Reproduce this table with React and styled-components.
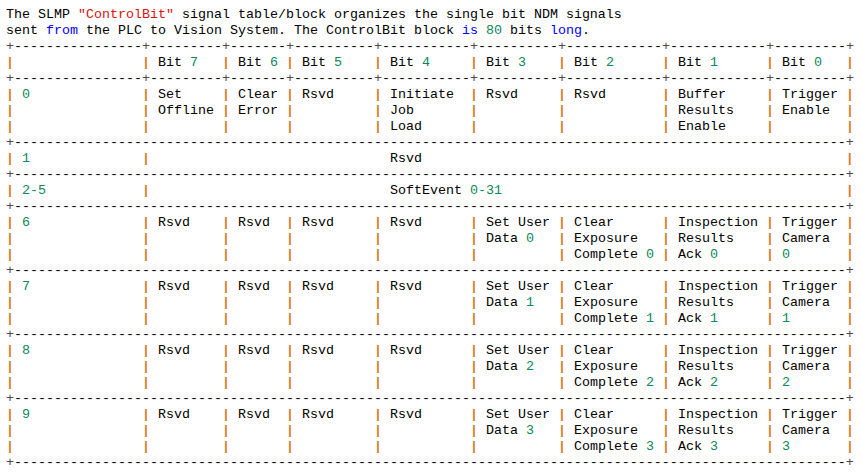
import React from 'react';
import styled, { createGlobalStyle } from 'styled-components';

const GlobalStyle = createGlobalStyle`
  body {
    margin: 0;
    background: #ffffff;
  }
`;

const widths = [16, 9, 7, 10, 11, 10, 12, 12, 9];
const spanWidth = widths.slice(1).reduce((a, b) => a + b, 0) + widths.length - 2;

const header = [['', 'Bit 7', 'Bit 6', 'Bit 5', 'Bit 4', 'Bit 3', 'Bit 2', 'Bit 1', 'Bit 0']];

const row0 = [
  ['0', 'Set', 'Clear', 'Rsvd', 'Initiate', 'Rsvd', 'Rsvd', 'Buffer', 'Trigger'],
  ['', 'Offline', 'Error', '', 'Job', '', '', 'Results', 'Enable'],
  ['', '', '', '', 'Load', '', '', 'Enable', ''],
];

const spanRows = [
  { label: '1', text: 'Rsvd' },
  { label: '2-5', text: 'SoftEvent 0-31' },
];

const userRow = n => [
  [String(n + 6), 'Rsvd', 'Rsvd', 'Rsvd', 'Rsvd', 'Set User', 'Clear', 'Inspection', 'Trigger'],
  ['', '', '', '', '', `Data ${n}`, 'Exposure', 'Results', 'Camera'],
  ['', '', '', '', '', '', `Complete ${n}`, `Ack ${n}`, String(n)],
];

const pad = (s, w) => s + ' '.repeat(Math.max(0, w - s.length));

function Highlight({ text }) {
  const parts = text.split(/(\d+(?:-\d+)?)/);
  return parts.map((p, i) =>
    /^\d/.test(p) ? <Num key={i}>{p}</Num> : <React.Fragment key={i}>{p}</React.Fragment>
  );
}

function Separator({ inner }) {
  if (!inner) {
    const total = widths.reduce((a, b) => a + b, 0) + widths.length - 1;
    return (
      <Line>
        <Corner>+</Corner>
        <Rule>{'-'.repeat(total)}</Rule>
        <Corner>+</Corner>
      </Line>
    );
  }
  return (
    <Line>
      <Corner>+</Corner>
      {widths.map((w, i) => (
        <React.Fragment key={i}>
          <Rule>{'-'.repeat(w)}</Rule>
          <Corner>+</Corner>
        </React.Fragment>
      ))}
    </Line>
  );
}

function CellLine({ cells }) {
  return (
    <Line>
      <Pipe>|</Pipe>
      {cells.map((c, i) => (
        <React.Fragment key={i}>
          <Highlight text={pad(c ? ' ' + c : '', widths[i])} />
          <Pipe>|</Pipe>
        </React.Fragment>
      ))}
    </Line>
  );
}

function SpanLine({ label, text }) {
  return (
    <Line>
      <Pipe>|</Pipe>
      <Highlight text={pad(' ' + label, widths[0])} />
      <Pipe>|</Pipe>
      <Highlight text={pad(' '.repeat(30) + text, spanWidth)} />
      <Pipe>|</Pipe>
    </Line>
  );
}

function Block({ lines }) {
  return (
    <>
      {lines.map((cells, i) => (
        <CellLine key={i} cells={cells} />
      ))}
      <Separator />
    </>
  );
}

export default function App() {
  return (
    <>
      <GlobalStyle />
      <Listing>
        <Line>
          The SLMP <Str>"ControlBit"</Str> signal table/block organizes the single bit NDM signals
        </Line>
        <Line>
          sent <Keyword>from</Keyword> the PLC to Vision System. The ControlBit block <Keyword>is</Keyword>{' '}
          <Num>80</Num> bits <Keyword>long</Keyword>.
        </Line>
        <Separator inner />
        <CellLine cells={header[0]} />
        <Separator inner />
        <Block lines={row0} />
        {spanRows.map(r => (
          <React.Fragment key={r.label}>
            <SpanLine label={r.label} text={r.text} />
            <Separator />
          </React.Fragment>
        ))}
        {[0, 1, 2, 3].map(n => (
          <Block key={n} lines={userRow(n)} />
        ))}
      </Listing>
    </>
  );
}

const Listing = styled.div`
  padding: 7px 6px;
  font-family: 'Liberation Mono', 'Courier New', monospace;
  font-size: 13.333px;
  line-height: 16px;
  color: #000000;
  white-space: pre;
`;

const Line = styled.div`
  height: 16px;
`;

const Pipe = styled.span`
  color: #e07a1f;
  font-weight: bold;
`;

const Corner = styled.span`
  color: #4a4a4a;
`;

const Rule = styled.span`
  color: #000000;
`;

const Num = styled.span`
  color: #09885a;
`;

const Keyword = styled.span`
  color: #0000ff;
`;

const Str = styled.span`
  color: #e01010;
`;
